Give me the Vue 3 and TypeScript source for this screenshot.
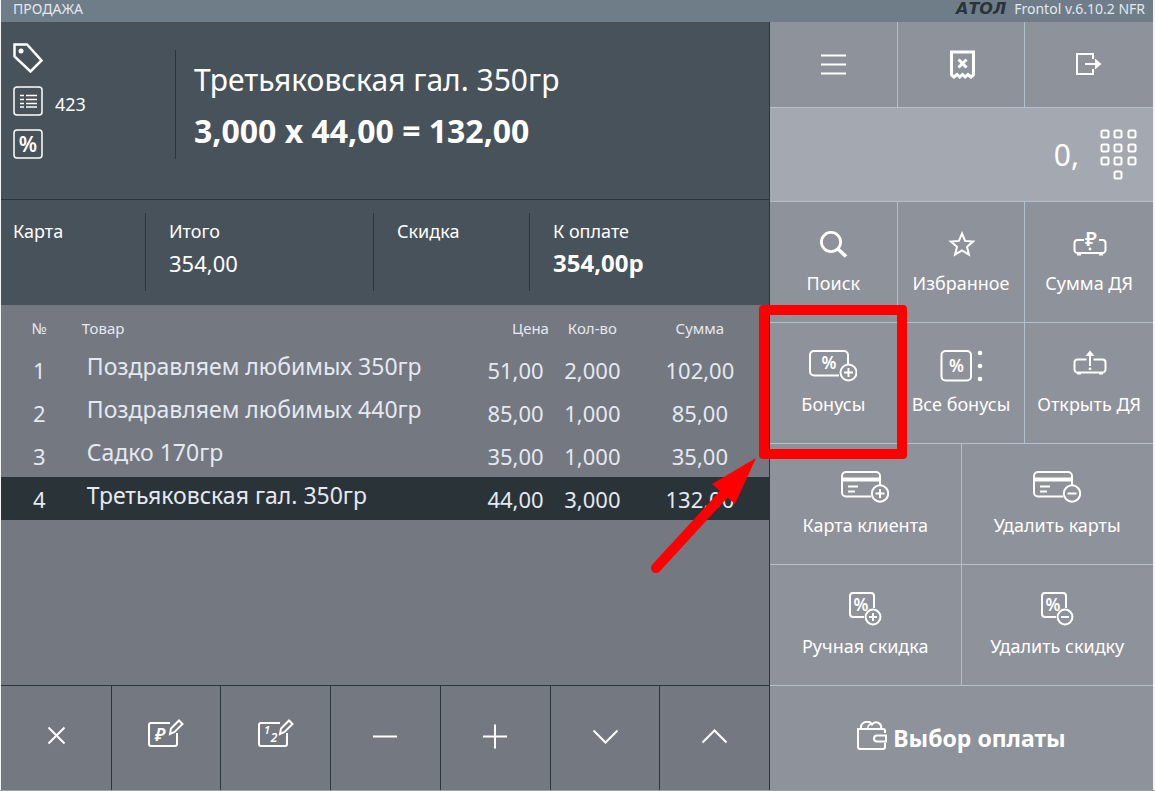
<script setup lang="ts">
interface Action {
  label: string
  icon: string
  marked?: boolean
}

interface Line {
  name: string
  price: string
  qty: string
  sum: string
}

const drawerFeet = '<path d="M14 28v2.500M36 28v2.500" stroke-width="4"/>'
const cardBody = '<path d="M30 29.500H5a4 4 0 0 1-4-4V9a4 4 0 0 1 4-4h30a4 4 0 0 1 4 4v9"/>'
const cardLines = '<path d="M1 12.500h38" stroke-width="4"/><path d="M7 19.500h10M7 24.500h7"/>'
const couponBody = '<path d="M23 29H12a3 3 0 0 1-3-3V8a3 3 0 0 1 3-3h18a3 3 0 0 1 3 3v12"/><text x="20" y="23" font-size="17">%</text>'
const notePad = '<path d="M28 8H9a2 2 0 0 0-2 2v19a2 2 0 0 0 2 2h24a2 2 0 0 0 2-2V18"/><path d="M28 19l1-5.500 8-8 3.500 3.500-8 8z" stroke-width="2"/>'

const icons: Record<string, string> = {
  menu: '<path d="M12 10.500h25M12 19.500h25M12 28.500h25"/>',
  receipt: '<path d="M14.500 30V7h22v23" stroke-width="3"/><path d="M14 29.500l3 2.500 3-2.500 2.800 2.500 2.700-2.500 2.700 2.500 2.800-2.500 3 2.500 3-2.500" stroke-width="3"/><path d="M21.500 14.500l8 8M29.500 14.500l-8 8" stroke-width="3"/>',
  exit: '<path d="M28 14V9H12v20h16v-5"/><path d="M20 19h12"/><path d="M30 13.500l6.500 5.500-6.500 5.500z" fill="#fff" stroke="none"/>',
  search: '<circle cx="22" cy="17" r="9.600" stroke-width="2.800"/><path d="M29 24l8 7.500" stroke-width="3.600"/>',
  star: '<path d="M25 8.500l3.100 7.400 8 .7-6.100 5.200 1.900 7.800-6.900-4.200-6.900 4.200 1.900-7.800-6.100-5.200 8-.7z"/>',
  drawerSum: '<path d="M19 15h-6.500a3 3 0 0 0-3 3v7a3 3 0 0 0 3 3h25a3 3 0 0 0 3-3v-7a3 3 0 0 0-3-3H34"/>' + drawerFeet + '<text x="26" y="21" font-size="20">₽</text><circle cx="25" cy="24" r="1.400" fill="#fff" stroke="none"/>',
  bonus: cardBody + '<text x="20" y="23" font-size="17">%</text><circle cx="39.500" cy="26.500" r="8"/><path d="M39.500 22v9M35 26.500h9"/>',
  allBonus: '<rect x="4.500" y="5" width="29.500" height="29.500" rx="4"/><text x="19.500" y="26" font-size="17">%</text><g fill="#fff" stroke="none"><circle cx="43" cy="7" r="2.300"/><circle cx="43" cy="20" r="2.300"/><circle cx="43" cy="33" r="2.300"/></g>',
  drawerOpen: '<path d="M21.500 13.500h-9a3 3 0 0 0-3 3v7a3 3 0 0 0 3 3h25a3 3 0 0 0 3-3v-7a3 3 0 0 0-3-3h-9"/><path d="M14 26v2.500M36 26v2.500" stroke-width="4"/><path d="M25 8v12"/><path d="M25 4.500l4.500 5.500h-9z" fill="#fff" stroke="none"/><circle cx="25" cy="22.800" r="1.400" fill="#fff" stroke="none"/>',
  cardAdd: cardBody + cardLines + '<circle cx="39" cy="26.500" r="8.200"/><path d="M39 22v9M34.500 26.500h9"/>',
  cardRemove: cardBody + cardLines + '<circle cx="39" cy="26.500" r="8.200"/><path d="M34.500 26.500h9"/>',
  couponAdd: couponBody + '<circle cx="32" cy="29" r="7.400" fill="#8e929b"/><path d="M32 25v8M28 29h8"/>',
  couponRemove: couponBody + '<circle cx="32" cy="29" r="7.400" fill="#8e929b"/><path d="M28 29h8"/>',
  close: '<path d="M16.500 12.500l16 16M32.500 12.500l-16 16"/>',
  editPrice: notePad + '<text x="18" y="26" font-size="18" font-style="italic">₽</text>',
  editQty: notePad + '<text x="15" y="19" font-size="11" font-style="italic">1</text><text x="22" y="27" font-size="12" font-style="italic">2</text>',
  minus: '<path d="M12 21.500h24"/>',
  plus: '<path d="M12 21.500h24M24 9.500v24"/>',
  down: '<path d="M12.500 15.500l12 12 12-12"/>',
  up: '<path d="M11.500 27.500l12-12 12 12"/>',
}

const system = [
  { label: 'Меню', icon: 'menu' },
  { label: 'Отменить чек', icon: 'receipt' },
  { label: 'Выход', icon: 'exit' },
]

const actions: Action[] = [
  { label: 'Поиск', icon: 'search' },
  { label: 'Избранное', icon: 'star' },
  { label: 'Сумма ДЯ', icon: 'drawerSum' },
  { label: 'Бонусы', icon: 'bonus', marked: true },
  { label: 'Все бонусы', icon: 'allBonus' },
  { label: 'Открыть ДЯ', icon: 'drawerOpen' },
]

const wideActions: Action[] = [
  { label: 'Карта клиента', icon: 'cardAdd' },
  { label: 'Удалить карты', icon: 'cardRemove' },
  { label: 'Ручная скидка', icon: 'couponAdd' },
  { label: 'Удалить скидку', icon: 'couponRemove' },
]

const tools = [
  { label: 'Удалить позицию', icon: 'close' },
  { label: 'Изменить цену', icon: 'editPrice' },
  { label: 'Изменить количество', icon: 'editQty' },
  { label: 'Уменьшить', icon: 'minus' },
  { label: 'Увеличить', icon: 'plus' },
  { label: 'Вниз', icon: 'down' },
  { label: 'Вверх', icon: 'up' },
]

const lines: Line[] = [
  { name: 'Поздравляем любимых 350гр', price: '51,00', qty: '2,000', sum: '102,00' },
  { name: 'Поздравляем любимых 440гр', price: '85,00', qty: '1,000', sum: '85,00' },
  { name: 'Садко 170гр', price: '35,00', qty: '1,000', sum: '35,00' },
  { name: 'Третьяковская гал. 350гр', price: '44,00', qty: '3,000', sum: '132,00' },
]
const selected = 3
const keys = [[5, 5], [18, 5], [32, 5], [5, 19], [18, 19], [32, 19], [5, 32], [18, 32], [32, 32], [18, 46]]
</script>

<template>
  <div class="pos">
    <header class="bar">
      <span>ПРОДАЖА</span>
      <span class="brand"><b class="logo">АТОЛ</b><span>Frontol v.6.10.2 NFR</span></span>
    </header>

    <main class="receipt">
      <section class="current">
        <div class="marks">
          <svg width="30" height="30" viewBox="0 0 30 30"><path d="M1.500 1.500H14L28.500 17.500 17.500 28.500 1.500 13.500z" stroke-width="2.500" /><circle cx="8" cy="8" r="2.500" fill="#fff" stroke="none" /></svg>
          <div class="mark">
            <svg width="30" height="30" viewBox="0 0 30 30"><rect x="1" y="1" width="28" height="28" rx="3" stroke-width="1.500" /><path d="M7 9.500h4M13 9.500h11M7 13.500h4M13 13.500h11M7 17.500h4M13 17.500h11M7 21h4M13 21h11" stroke-width="1.500" /></svg>
            <span>423</span>
          </div>
          <svg width="30" height="30" viewBox="0 0 30 30"><rect x="1" y="1" width="28" height="28" rx="3" stroke-width="1.500" /><text x="15" y="23" font-size="21">%</text></svg>
        </div>
        <div class="item">
          <div>Третьяковская гал. 350гр</div>
          <div class="calc">3,000 x 44,00 = 132,00</div>
        </div>
      </section>

      <section class="totals">
        <div class="total"><span>Карта</span></div>
        <div class="total"><span>Итого</span><span class="value">354,00</span></div>
        <div class="total"><span>Скидка</span></div>
        <div class="total"><span>К оплате</span><b class="value due">354,00р</b></div>
      </section>

      <div class="list">
        <table>
          <colgroup><col class="c-num" /><col /><col class="c-num" /><col class="c-num" /><col class="c-sum" /></colgroup>
          <thead>
            <tr><th>№</th><th class="h-name">Товар</th><th class="h-price">Цена</th><th>Кол-во</th><th>Сумма</th></tr>
          </thead>
          <tbody>
            <tr v-for="(line, i) in lines" :key="line.name" :class="{ selected: i === selected }">
              <td>{{ i + 1 }}</td>
              <td class="name">{{ line.name }}</td>
              <td>{{ line.price }}</td>
              <td>{{ line.qty }}</td>
              <td>{{ line.sum }}</td>
            </tr>
          </tbody>
        </table>
      </div>

      <nav class="tools">
        <button v-for="t in tools" :key="t.icon" type="button" :aria-label="t.label">
          <svg class="icon" viewBox="0 0 48 40" v-html="icons[t.icon]" />
        </button>
      </nav>
    </main>

    <aside class="panel">
      <div class="row three system">
        <button v-for="s in system" :key="s.icon" type="button" :aria-label="s.label">
          <svg class="icon" viewBox="0 0 48 40" v-html="icons[s.icon]" />
        </button>
      </div>
      <div class="display">
        <output>0,</output>
        <button type="button" class="keypad" aria-label="Клавиатура">
          <svg width="37" height="52" viewBox="0 0 37 52">
            <rect v-for="([x, y], i) in keys" :key="i" :x="x - 3.5" :y="y - 3.5" width="7" height="7" rx="1.500" />
          </svg>
        </button>
      </div>
      <div class="row three actions">
        <button v-for="a in actions" :key="a.icon" type="button" :class="{ marked: a.marked }">
          <svg class="icon" viewBox="0 0 48 40" v-html="icons[a.icon]" />
          <span>{{ a.label }}</span>
          <svg v-if="a.marked" class="pointer" viewBox="0 0 108 118" aria-hidden="true">
            <path d="M6 113L74 39" stroke="#f00" stroke-width="10" stroke-linecap="round" />
            <path d="M106 3L62 29 85 49z" fill="#f00" stroke="none" />
          </svg>
        </button>
      </div>
      <div class="row two actions">
        <button v-for="a in wideActions" :key="a.icon" type="button">
          <svg class="icon" viewBox="0 0 48 40" v-html="icons[a.icon]" />
          <span>{{ a.label }}</span>
        </button>
      </div>
      <button type="button" class="pay">
        <svg width="30" height="34" viewBox="0 0 30 34">
          <path d="M28 12V10a2 2 0 0 0-2-2H1v18a2 2 0 0 0 2 2h23a2 2 0 0 0 2-2v-4" />
          <path d="M29 14.500H20a3 3 0 0 0 0 6h9z" />
          <path d="M4 7.500a6 6 0 0 1 11-4 5 5 0 0 1 9 4" />
          <path d="M11 7a3 3 0 0 1 4-3.500" stroke-width="1.500" />
        </svg>
        <span>Выбор оплаты</span>
      </button>
    </aside>
  </div>
</template>

<style>
body {
  margin: 0;
  background: #f4f5f6;
}
</style>

<style scoped>
.pos {
  display: grid;
  grid-template: 22px 1fr / 2fr 1fr;
  box-sizing: border-box;
  min-height: 100vh;
  padding: 0 2px 0 1px;
  border-bottom: 1px solid #90a4b8;
  font-family: "Noto Sans", "Open Sans", sans-serif;
  font-size: 18px;
  color: #fff;
}

.bar {
  grid-column: 1 / -1;
  display: flex;
  justify-content: space-between;
  padding: 0 8px 4px 12px;
  background: #6f7d89;
  color: #e2e8ee;
  font-size: 14px;
  line-height: 18px;
}

.brand {
  display: flex;
  gap: 8px;
}

.logo {
  color: #28343b;
  font-family: "DejaVu Sans", sans-serif;
  font-size: 16px;
  line-height: 18px;
  font-style: italic;
}

svg {
  display: block;
  flex: none;
  fill: none;
  stroke: #fff;
  stroke-width: 2;
}

svg :deep(text),
svg text {
  fill: #fff;
  stroke: none;
  text-anchor: middle;
  font-family: "Noto Sans", "DejaVu Sans", sans-serif;
  font-weight: 600;
}

.icon {
  width: 48px;
  height: 40px;
}

button {
  display: flex;
  align-items: center;
  justify-content: center;
  min-width: 0;
  margin: 0;
  padding: 0;
  border: 0;
  background: none;
  color: inherit;
  font: inherit;
  white-space: nowrap;
}

.receipt {
  display: flex;
  flex-direction: column;
  min-width: 0;
  background: #747880;
}

.current {
  display: flex;
  padding: 21px 12px 40px;
  border-bottom: 1px solid #2a353c;
  background: #48525a;
}

.marks {
  display: flex;
  flex-direction: column;
  gap: 13px;
  width: 162px;
}

.mark {
  display: flex;
  align-items: center;
  gap: 12px;
  height: 30px;
}

.mark span {
  padding-top: 5px;
}

.item {
  margin-top: 7px;
  padding: 4px 0 0 18px;
  border-left: 1px solid #2a353c;
  font-size: 30px;
  line-height: 52px;
  white-space: nowrap;
}

.calc {
  font-size: 32px;
  font-weight: 700;
  line-height: 50px;
}

.totals {
  display: grid;
  grid-template-columns: 12fr 19fr 13fr 20fr;
  padding: 13px 0 14px;
  background: #48525a;
}

.total {
  display: flex;
  flex-direction: column;
  gap: 4px;
  height: 72px;
  padding: 6px 0 0 23px;
  border-left: 1px solid #2a353c;
  line-height: 24px;
}

.total:first-child {
  padding-left: 12px;
  border-left: 0;
}

.value {
  font-size: 22px;
  line-height: 32px;
}

.due {
  font-size: 24px;
}

.list {
  flex: 1;
}

table {
  width: 100%;
  table-layout: fixed;
  border-collapse: collapse;
  color: #e4e9f2;
}

.c-num {
  width: 10%;
}

.c-sum {
  width: 18%;
}

th,
td {
  box-sizing: border-box;
  height: 43px;
  padding: 0;
  font-weight: 400;
  text-align: center;
  white-space: nowrap;
}

th {
  padding-top: 2px;
  font-size: 15px;
}

td {
  font-size: 22px;
  line-height: 30px;
}

th.h-name {
  padding-left: 4px;
  text-align: left;
}

th.h-price {
  padding-right: 5px;
  text-align: right;
}

td.name {
  padding: 0 0 8px 9px;
  font-size: 23px;
  text-align: left;
}

.selected {
  background: #2a3338;
}

.tools {
  display: grid;
  grid-template-columns: repeat(7, 1fr);
  height: 104px;
  border-top: 1px solid #2a353c;
}

.tools button {
  padding-bottom: 6px;
}

.tools button + button {
  border-left: 1px solid #2a353c;
}

.panel {
  display: flex;
  flex-direction: column;
  min-width: 0;
  border-left: 1px solid #2a353c;
  background: #8e929b;
}

.row {
  display: grid;
}

.row button {
  border-right: 1px solid #b2c1ce;
  border-bottom: 1px solid #b2c1ce;
}

.three {
  grid-template-columns: repeat(3, 1fr);
}

.two {
  grid-template-columns: repeat(2, 1fr);
}

.three button:nth-child(3n),
.two button:nth-child(2n) {
  border-right: 0;
}

.system button {
  height: 86px;
}

.display {
  display: flex;
  align-items: center;
  justify-content: flex-end;
  gap: 21px;
  height: 93px;
  padding-right: 16px;
  border-bottom: 1px solid #b2c1ce;
  background: #a4a8b0;
  font-size: 30px;
}

.actions button {
  flex-direction: column;
  gap: 6px;
  box-sizing: border-box;
  height: 121px;
  padding-bottom: 4px;
  line-height: 24px;
}

.actions .marked {
  position: relative;
}

.marked::after {
  content: "";
  position: absolute;
  inset: -18px -10px -16px -11px;
  z-index: 1;
  border: 10px solid #f00;
  border-radius: 4px;
}

.pointer {
  position: absolute;
  top: 132px;
  right: 139px;
  z-index: 1;
  width: 108px;
  height: 118px;
}

.pay {
  flex: 1;
  gap: 6px;
  min-height: 104px;
  font-size: 23px;
  font-weight: 700;
}
</style>
